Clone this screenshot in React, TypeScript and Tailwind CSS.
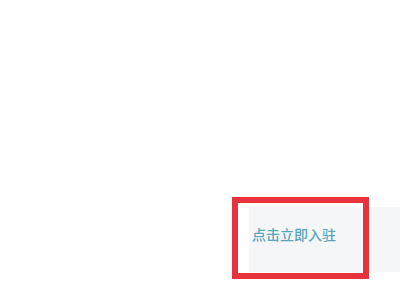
export default function App() {
  return (
    <div className="relative h-[300px] w-[400px] overflow-hidden bg-white">
      {/* Join panel */}
      <div className="ml-[249px] mt-[207px] h-[65px] bg-[#f5f6f8] pl-[3px] pt-[20px]">
        <span
          className="block text-[14px] font-medium leading-none text-[#5aa6bb]"
          style={{ fontFamily: '"Noto Sans CJK SC", sans-serif' }}
        >
          点击立即入驻
        </span>
      </div>

      {/* Red highlight frame */}
      <div className="absolute left-[232px] top-[197px] h-[82px] w-[137px] border-[6px] border-[#e8333d]" />
    </div>
  );
}
